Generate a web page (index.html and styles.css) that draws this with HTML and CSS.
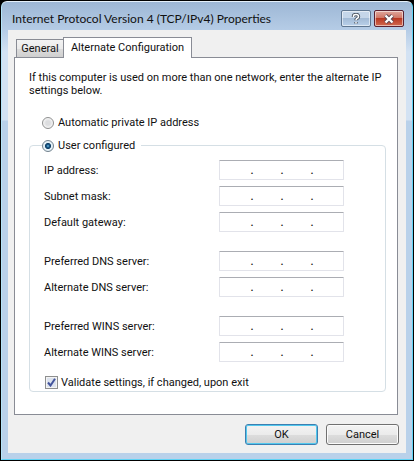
FILE: index.html
```html
<!DOCTYPE html>
<html lang="en">
<head>
<meta charset="utf-8">
<title>Internet Protocol Version 4 (TCP/IPv4) Properties</title>
<link rel="stylesheet" href="styles.css">
</head>
<body>
<main class="window">
  <header class="titlebar">
    <h1 class="title">Internet Protocol Version 4 (TCP/IPv4) Properties</h1>
    <button class="caption help" type="button" aria-label="Help">
      <svg width="10" height="12" viewBox="0 0 10 12"><g fill="none"><path d="M2.5 4V3q0-1.500 2.500-1.500T7.500 3.500Q7.500 5 6 5.500 5 6 5 7.300M5 9v1.600" stroke="#4c5663" stroke-width="3.400"/><path d="M2.500 4V3q0-1.500 2.500-1.500T7.500 3.500Q7.500 5 6 5.500 5 6 5 7.300M5 9v1.600" stroke="#fff" stroke-width="1.500"/></g></svg>
    </button>
    <button class="caption close" type="button" aria-label="Close">
      <svg width="12" height="10" viewBox="0 0 12 10"><g fill="none"><path d="M2.500 1.500l7 7M9.500 1.500l-7 7" stroke="#5d4650" stroke-width="4.200"/><path d="M2.500 1.500l7 7M9.500 1.500l-7 7" stroke="#fff" stroke-width="2.300"/></g></svg>
    </button>
  </header>
  <form class="client">
    <div class="tabs" role="tablist">
      <button class="tab" type="button" role="tab" aria-selected="false">General</button>
      <button class="tab active" type="button" role="tab" aria-selected="true">Alternate Configuration</button>
    </div>
    <section class="panel" role="tabpanel">
      <p class="intro">If this computer is used on more than one network, enter the alternate IP settings below.</p>
      <label class="option auto"><input class="radio" type="radio" name="mode">Automatic private IP address</label>
      <fieldset class="group">
        <legend class="legend"><label class="option"><input class="radio" type="radio" name="mode" checked>User configured</label></legend>
        <div class="row"><label for="ip">IP address:</label><div class="address"><input id="ip"><span>.</span><input aria-label="IP address, part 2"><span>.</span><input aria-label="IP address, part 3"><span>.</span><input aria-label="IP address, part 4"></div></div>
        <div class="row"><label for="mask">Subnet mask:</label><div class="address"><input id="mask"><span>.</span><input aria-label="Subnet mask, part 2"><span>.</span><input aria-label="Subnet mask, part 3"><span>.</span><input aria-label="Subnet mask, part 4"></div></div>
        <div class="row"><label for="gateway">Default gateway:</label><div class="address"><input id="gateway"><span>.</span><input aria-label="Default gateway, part 2"><span>.</span><input aria-label="Default gateway, part 3"><span>.</span><input aria-label="Default gateway, part 4"></div></div>
        <div class="row first"><label for="dns1">Preferred DNS server:</label><div class="address"><input id="dns1"><span>.</span><input aria-label="Preferred DNS server, part 2"><span>.</span><input aria-label="Preferred DNS server, part 3"><span>.</span><input aria-label="Preferred DNS server, part 4"></div></div>
        <div class="row"><label for="dns2">Alternate DNS server:</label><div class="address"><input id="dns2"><span>.</span><input aria-label="Alternate DNS server, part 2"><span>.</span><input aria-label="Alternate DNS server, part 3"><span>.</span><input aria-label="Alternate DNS server, part 4"></div></div>
        <div class="row first"><label for="wins1">Preferred WINS server:</label><div class="address"><input id="wins1"><span>.</span><input aria-label="Preferred WINS server, part 2"><span>.</span><input aria-label="Preferred WINS server, part 3"><span>.</span><input aria-label="Preferred WINS server, part 4"></div></div>
        <div class="row"><label for="wins2">Alternate WINS server:</label><div class="address"><input id="wins2"><span>.</span><input aria-label="Alternate WINS server, part 2"><span>.</span><input aria-label="Alternate WINS server, part 3"><span>.</span><input aria-label="Alternate WINS server, part 4"></div></div>
        <label class="option validate"><span class="tick"><input class="check" type="checkbox" checked><svg class="mark" width="9" height="9" viewBox="0 0 9 9"><path d="M1 4.500l2.500 3L8 .8" fill="none" stroke="#43549c" stroke-width="2"/></svg></span>Validate settings, if changed, upon exit</label>
      </fieldset>
    </section>
    <footer class="actions">
      <button class="action primary" type="button">OK</button>
      <button class="action" type="button">Cancel</button>
    </footer>
  </form>
</main>
</body>
</html>
```
FILE: styles.css
```css
* {
  box-sizing: border-box;
}

body {
  margin: 0;
  background: #000;
  color: #111;
  font: 11px/13px Roboto, "Noto Sans", sans-serif;
}

button,
input {
  margin: 0;
  padding: 0;
  font: inherit;
  color: inherit;
}

.window {
  margin: 1px;
  padding: 0 6px 6px;
  border: 1px solid #5fd3f5;
  border-left-color: #b4e4f8;
  border-top-color: #e4f0fa;
  border-radius: 6px 6px 0 0;
  background: linear-gradient(#9db7d5, #b5cce6 28px, #d3e2f3 50px, #d3e2f3 118px, #b9d1ea 119px);
}

.titlebar {
  display: flex;
  align-items: center;
  gap: 3px;
  height: 28px;
  padding: 5px 2px 0 4px;
}

.title {
  flex: 1;
  margin: 0;
  font: 12px/16px Lato, "Open Sans", sans-serif;
  white-space: nowrap;
}

.caption {
  display: flex;
  align-items: center;
  justify-content: center;
  width: 30px;
  height: 17px;
  border: 1px solid #5f7690;
  border-radius: 2px;
  box-shadow: inset 0 0 0 1px #ffffff88;
}

.help {
  background: linear-gradient(#c5d6e9 50%, #a3bbd6 50%, #b9d0e9);
}

.close {
  border-color: #5a2130;
  background: linear-gradient(#dfa79d, #cf7260 50%, #b93822 50%, #d16a50);
}

.client {
  padding: 7px 8px 8px 6px;
  background: #f0f0f0;
}

.tabs {
  display: flex;
  align-items: flex-end;
  padding-left: 2px;
}

.tab {
  height: 18px;
  width: 47px;
  border: 1px solid #898c95;
  border-width: 1px 0 0 1px;
  background: linear-gradient(#f3f3f3, #ebebeb 50%, #dddddd 50%, #cfcfcf);
  white-space: nowrap;
}

.tab.active {
  z-index: 1;
  width: 129px;
  height: 21px;
  margin-bottom: -1px;
  padding-bottom: 2px;
  border-right-width: 1px;
  background: #fff;
}

.panel {
  padding: 13px 11px 22px 14px;
  border: 1px solid #898c95;
  background: #fff;
}

.intro {
  margin: 0;
}

.option {
  display: flex;
  align-items: center;
  gap: 4px;
}

.auto {
  margin: 19px 0 0 13px;
}

.radio {
  appearance: none;
  width: 12px;
  height: 12px;
  border: 1px solid #8e8f8f;
  border-radius: 50%;
  background: radial-gradient(#dcdddf 30%, #f6f6f6 70%);
}

.radio:checked {
  border-color: #71818d;
  background: radial-gradient(circle at 50% 50%, #7cc6e6, #16588a 20%, #123f63 38%, #e4f0f6 48%);
}

.group {
  min-width: 0;
  margin: 10px 0 0;
  padding: 8px 41px 2px 14px;
  border: 1px solid #d5dfe5;
  border-radius: 4px;
}

.legend {
  padding: 0 6px 0 0;
  margin-left: -2px;
}

.row {
  display: flex;
  align-items: center;
  justify-content: space-between;
  height: 20px;
  margin-bottom: 6px;
}

.row.first {
  margin-top: 19px;
}

.address {
  display: grid;
  grid-template-columns: 30px 4px 26px 4px 26px 4px 1fr;
  align-items: center;
  width: 125px;
  height: 20px;
  border: 1px solid #e2e3ea;
  border-top-color: #abadb3;
  border-radius: 1px;
  text-align: center;
}

.address span {
  font-weight: 500;
}

.address input {
  width: 100%;
  height: 16px;
  border: 0;
  background: none;
}

.validate {
  margin: 14px 0 0 1px;
  gap: 3px;
}

.tick {
  display: grid;
  width: 13px;
  height: 13px;
}

.check,
.mark {
  grid-area: 1 / 1;
  place-self: center;
}

.check {
  appearance: none;
  width: 13px;
  height: 13px;
  border: 1px solid #8e8f8f;
  background: #dde3ee;
  box-shadow: inset 0 0 0 1px #f4f4f4;
}

.actions {
  display: flex;
  justify-content: flex-end;
  gap: 8px;
  margin: 9px -1px 0 0;
}

.action {
  width: 73px;
  height: 21px;
  border: 1px solid #707070;
  border-radius: 3px;
  background: linear-gradient(#f3f3f3, #ebebeb 50%, #dddddd 50%, #cfcfcf);
  box-shadow: inset 0 0 0 1px #fbfbfb;
}

.primary {
  border-color: #3c7fb1;
  box-shadow: inset 0 0 0 1px #52c8ee;
}
```
